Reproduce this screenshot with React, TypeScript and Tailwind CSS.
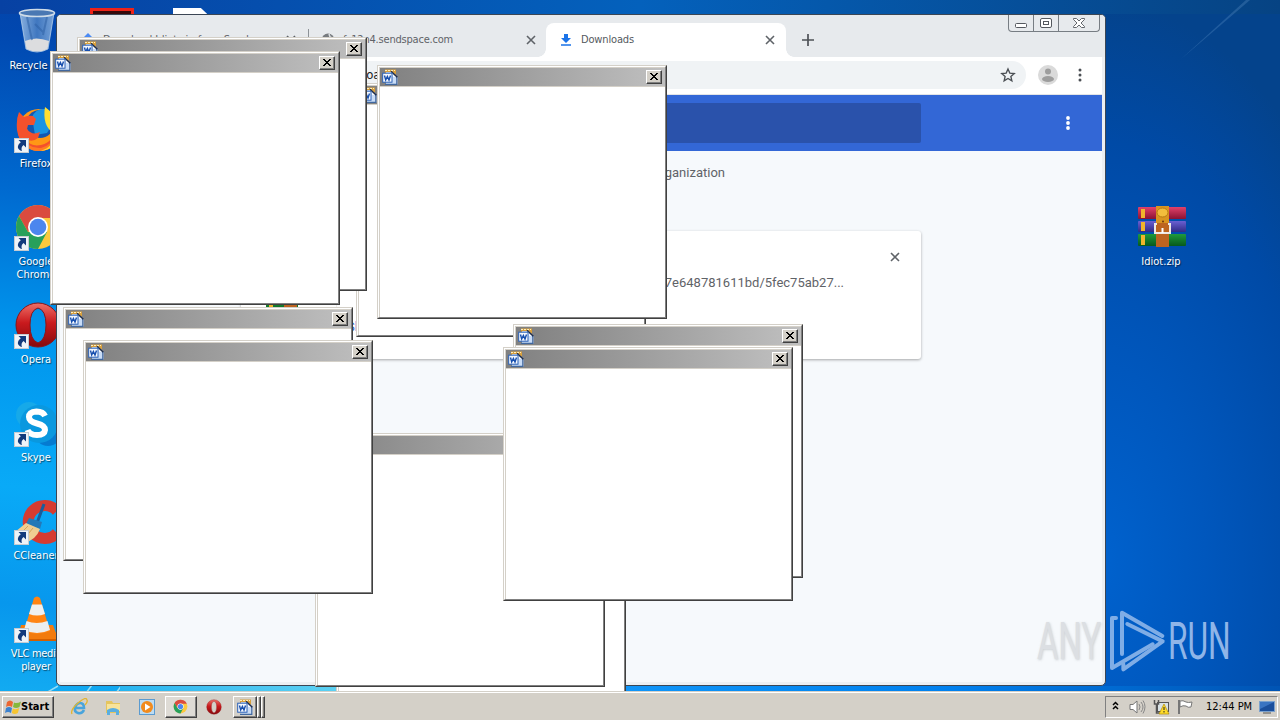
import React from 'react';

type Point = { x: number; y: number };

const WIN: Point[] = [
  { x: 336, y: 458 },
  { x: 315, y: 433 },
  { x: 356, y: 83 },
  { x: 377, y: 65 },
  { x: 77, y: 37 },
  { x: 50, y: 51 },
  { x: 63, y: 307 },
  { x: 83, y: 340 },
  { x: 513, y: 324 },
  { x: 503, y: 347 },
];

function WordIcon({ className = 'h-4 w-4' }: { className?: string }) {
  return (
    <svg viewBox="0 0 16 16" className={className}>
      <path d="M3 .5h11v5H3z" fill="#d9a03c" />
      <path d="M3 1.500h10" stroke="#ffeebc" strokeDasharray="2 1" />
      <path d="M4 3h6.500L15.500 8v7.500H4z" fill="#c9dcf6" />
      <path d="M14.800 7.500v7.800H3" fill="none" stroke="#41689f" strokeWidth="1.200" />
      <path d="M9.500 2.500l5.500 5.500h-4z" fill="#f4f9ff" />
      <path d="M9 2.200l6.300 6" stroke="#1c2c4c" strokeWidth="1.500" />
      <rect x=".7" y="4.200" width="9.300" height="9" fill="#f5f9ff" stroke="#2a60b6" />
      <path d="M2.500 6.500l1.200 4.500 1.700-3.500L7 11l1.500-4.500" fill="none" stroke="#174fae" strokeWidth="1.400" />
    </svg>
  );
}

function PopupWindow({ x, y }: Point) {
  return (
    <div
      className="absolute h-[254px] w-[290px] border border-t-[#d4d0c8] border-r-[#404040] border-b-[#404040] border-l-[#d4d0c8]"
      style={{ left: x, top: y }}
    >
      <div className="flex h-full flex-col border border-t-white border-r-[#808080] border-b-[#808080] border-l-white bg-[#d4d0c8] pt-px pl-px">
        <div className="flex h-[18px] shrink-0 items-center justify-between bg-linear-to-r from-[#808080] to-[#c0c0c0] pr-[3px] pl-[2px]">
          <WordIcon />
          <div className="flex h-[14px] w-4 items-center justify-center border border-t-white border-r-[#404040] border-b-[#404040] border-l-white bg-[#d4d0c8] pb-px shadow-[inset_-1px_-1px_0_#808080]">
            <svg viewBox="0 0 8 7" className="h-[7px] w-2" shapeRendering="crispEdges">
              <path
                d="M0 0h2v1h1v1h2v-1h1v-1h2v1h-1v1h-1v1h-1v1h1v1h1v1h1v1h-2v-1h-1v-1h-2v1h-1v1h-2v-1h1v-1h1v-1h1v-1h-1v-1h-1v-1h-1z"
                fill="#000"
              />
            </svg>
          </div>
        </div>
        <div className="h-px shrink-0 bg-[#d4d0c8]" />
        <div className="flex-1 bg-white" />
      </div>
    </div>
  );
}

function Shortcut() {
  return (
    <svg viewBox="0 0 15 15" className="absolute bottom-0 left-0 h-[15px] w-[15px]">
      <rect x=".5" y=".5" width="14" height="14" fill="#eef3f8" stroke="#c5cbd2" />
      <path d="M4.500 2H12v7.500L9.600 7C7.500 8.500 7 10.500 8 13 3 12 2.500 7.500 6.800 4.300z" fill="#123a7c" />
    </svg>
  );
}

function BinIcon() {
  return (
    <svg viewBox="0 0 48 48" className="h-12 w-12">
      <defs>
        <linearGradient id="bin"><stop stopColor="#a9c9ea" /><stop offset=".5" stopColor="#4f83c4" /><stop offset="1" stopColor="#92b8e2" /></linearGradient>
      </defs>
      <path d="M5 6l6 36q11 6 22 0l6-36z" fill="url(#bin)" fillOpacity=".8" stroke="#b5cfea" strokeWidth=".8" />
      <path d="M10 34q11-5 24 0l-1.500 8q-10 5-21 0z" fill="#dcdddf" />
      <path d="M12 10l5 23M32 10l-4 18M20 17l9 9" stroke="#2f62a6" strokeWidth="2" opacity=".55" />
      <ellipse cx="22" cy="6" rx="17.500" ry="3.500" fill="#4a78b3" stroke="#cfdce8" strokeWidth="1.600" />
    </svg>
  );
}

function FirefoxIcon() {
  return (
    <svg viewBox="0 0 48 48" className="h-12 w-12">
      <circle cx="25" cy="25" r="21" fill="#ff9815" />
      <circle cx="26" cy="19" r="14" fill="#1557b0" />
      <path d="M18 12Q22 3 31 4l4 10 3 6-5 8-12 2z" fill="#1a94e2" />
      <path d="M3 25Q2 14 5 7l5 5q5-2 9-1l3 3-2 6h-6l-1 4q5 7 13 3l-2 6q-6 5-12 1 4 8 15 6Q41 37 41 19q8 25-14 27Q6 45 3 25z" fill="#f4512c" />
      <path d="M8 32q6 12 19 11 12-3 15-16 0 17-17 19Q11 46 8 32z" fill="#ff7b22" />
      <path d="M31 2q16 12 15 25-3 18-20 19 15-4 13-18Q28 20 31 2z" fill="#ffdf31" />
    </svg>
  );
}

function ChromeIcon({ className = 'h-12 w-12' }: { className?: string }) {
  return (
    <svg viewBox="0 0 48 48" className={className}>
      <circle cx="24" cy="24" r="22" fill="#fcc93e" />
      <path d="M5 13A22 22 0 0 1 43 13L44 15H24L14 29z" fill="#da4b3f" />
      <path d="M5 13A22 22 0 0 0 24 46L33 29 14 29z" fill="#27a05b" />
      <circle cx="24" cy="24" r="10" fill="#fff" />
      <circle cx="24" cy="24" r="8.300" fill="#4c86ee" />
    </svg>
  );
}

function OperaIcon({ className = 'h-12 w-12' }: { className?: string }) {
  return (
    <svg viewBox="0 0 48 48" className={className}>
      <defs>
        <linearGradient id="opera" x2="0" y2="1">
          <stop offset="0" stopColor="#ee7068" />
          <stop offset=".45" stopColor="#c91a1d" />
          <stop offset="1" stopColor="#85090c" />
        </linearGradient>
      </defs>
      <path
        fillRule="evenodd"
        d="M24 2a22 22 0 1 0 0 44 22 22 0 1 0 0-44m0 5q8 2 8 17t-8 18q-8-3-8-18t8-17"
        fill="url(#opera)"
        stroke="#8c1215"
      />
    </svg>
  );
}

function SkypeIcon() {
  return (
    <svg viewBox="0 0 48 48" className="h-12 w-12">
      <circle cx="15" cy="16" r="13" fill="#16a9e9" />
      <circle cx="34" cy="34" r="13" fill="#057bd1" />
      <circle cx="25" cy="25" r="19" fill="#0a98df" />
      <path d="M31 17q-2-4.500-8.500-4.500Q15 13 15 18q0 4.500 8 6.500t8 6.500q-.5 5-8 5-7.500 0-9.500-5" fill="none" stroke="#fff" strokeWidth="6" />
    </svg>
  );
}

function CCleanerIcon() {
  return (
    <svg viewBox="0 0 48 48" className="h-12 w-12">
      <path d="M43 14a16.500 16.500 0 1 0 0 22" fill="none" stroke="#d63b31" strokeWidth="11" />
      <path d="M30 7l-7 19" stroke="#195d9c" strokeWidth="3" />
      <path d="M15 21l13 4-2 7-14-5z" fill="#2578b7" />
      <path d="M12 26l14 6q-4 11-16 14L1 35z" fill="#f0cd92" />
      <path d="M14 29L5 38M19 31l-9 11" stroke="#d6a45b" />
    </svg>
  );
}

function VlcIcon() {
  return (
    <svg viewBox="0 0 48 48" className="h-12 w-12">
      <path d="M7 30h32l6 16H3z" fill="#f27b0d" />
      <path d="M20 3q3-3 6 0l10 33q-13 6-26 0z" fill="#ff8412" />
      <path d="M18 9.500h10l3 9.500q-8 3-16 0z" fill="#eef0f0" />
      <path d="M12.500 26q10 4 21 0l2.500 9q-13 6-26 0z" fill="#eceeee" />
      <path d="M3 44h42v2H3z" fill="#d35f00" />
    </svg>
  );
}

function ArchiveIcon() {
  return (
    <svg viewBox="0 0 48 42" className="h-[42px] w-12 shrink-0">
      <defs>
        <linearGradient id="bookRed" x2="0" y2="1"><stop stopColor="#e2416a" /><stop offset="1" stopColor="#8a1233" /></linearGradient>
        <linearGradient id="bookBlue" x2="0" y2="1"><stop stopColor="#6a60d2" /><stop offset="1" stopColor="#312a86" /></linearGradient>
        <linearGradient id="bookGreen" x2="0" y2="1"><stop stopColor="#1f9a3c" /><stop offset="1" stopColor="#07591c" /></linearGradient>
      </defs>
      <rect y="1" width="48" height="12" rx="1" fill="url(#bookRed)" />
      <rect y="15" width="48" height="11" rx="1" fill="url(#bookBlue)" />
      <rect y="28" width="48" height="12" rx="1" fill="url(#bookGreen)" />
      <path d="M3 3h4v9H3zM3 16h4v9H3zM3 29h4v10H3z" fill="#f0b52c" />
      <rect x="18" y="0" width="13" height="41" fill="#bd6420" />
      <path d="M18 0h13v17H18z" fill="#d99420" />
      <ellipse cx="24.500" cy="6.500" rx="5.500" ry="4.500" fill="#f3bd3c" stroke="#b87a12" />
      <circle cx="25" cy="15.500" r="1" fill="#6d3510" />
      <path d="M19 18h-2v9h15v-9h-2" fill="none" stroke="#eee9e5" strokeWidth="2" />
      <path d="M24.500 22v5" stroke="#fff" strokeWidth="2" />
    </svg>
  );
}

type DesktopItemProps = {
  icon: React.ReactNode;
  lines: string[];
  className: string;
  shortcut?: boolean;
};

function DesktopItem({ icon, lines, className, shortcut = true }: DesktopItemProps) {
  return (
    <div className={`absolute flex w-[76px] flex-col items-center text-center ${className}`}>
      <div className={shortcut ? 'relative mt-px ml-[3px] h-12 w-12' : 'relative ml-px h-12 w-12'}>
        {icon}
        {shortcut && <Shortcut />}
      </div>
      <div className="mt-1 text-[11px] leading-[13px] whitespace-nowrap text-white [text-shadow:1px_1px_1px_#0008]">
        {lines.map((l) => (
          <div key={l}>{l}</div>
        ))}
      </div>
    </div>
  );
}

function CloseX({ className }: { className: string }) {
  return (
    <svg viewBox="0 0 10 10" className={className}>
      <path d="M1 1l8 8M9 1L1 9" stroke="#5f6368" strokeWidth="1.600" />
    </svg>
  );
}

function TabStrip() {
  return (
    <div className="relative flex h-[42px] shrink-0 items-end bg-[#e7eaed] pl-5 text-[11px] text-[#5f6368]">
      <div className="flex h-[34px] w-[231px] items-center gap-2 pl-1">
        <svg viewBox="0 0 14 14" className="h-3.5 w-3.5"><path d="M7 0l7 7-7 7-7-7z" fill="#4a8af4" /></svg>
        <span className="w-[175px] overflow-hidden whitespace-nowrap">Download Idiot.zip from Sendspace</span>
        <CloseX className="h-2.5 w-2.5" />
      </div>
      <div className="mb-2 h-5 w-px bg-[#8d9297]" />
      <div className="flex h-[34px] w-[237px] items-center pl-3">
        <svg viewBox="0 0 14 14" className="h-3.5 w-3.5"><circle cx="7" cy="7" r="6.500" fill="#777b7f" /><path d="M2 5l4 1 2 3-2 4M8 1l1 3 4 2" stroke="#dde0e3" strokeWidth="1.500" fill="none" /></svg>
        <span className="ml-2 tracking-[-0.2px]">fs12n4.sendspace.com</span>
        <CloseX className="mr-[10px] ml-auto h-2.5 w-2.5" />
      </div>
      <div className="relative flex h-[34px] w-[240px] items-center rounded-t-lg bg-white pl-[14px]">
        <svg viewBox="0 0 12 12" className="h-3 w-3"><path d="M4 0h4v4h3L6 9 1 4h3zM1 10.300h10v1.400H1z" fill="#1a73e8" /></svg>
        <span className="ml-[9px] tracking-[-0.15px] text-[#55595e]">Downloads</span>
        <CloseX className="mr-[11px] ml-auto h-2.5 w-2.5" />
        <div className="absolute bottom-0 -left-2 h-2 w-2 bg-[radial-gradient(circle_at_0_0,#e7eaed_7.5px,#fff_8px)]" />
        <div className="absolute -right-2 bottom-0 h-2 w-2 bg-[radial-gradient(circle_at_100%_0,#e7eaed_7.5px,#fff_8px)]" />
      </div>
      <svg viewBox="0 0 12 12" className="mb-[11px] ml-4 h-3 w-3"><path d="M6 0v12M0 6h12" stroke="#4d5156" strokeWidth="1.700" /></svg>
      <div className="absolute top-0 right-[5px] flex h-[17px] w-[92px] rounded-b border border-t-0 border-[#777d83]">
        <div className="flex w-[25px] items-center justify-center border-r border-[#777d83]">
          <svg viewBox="0 0 12 5" className="mt-1 h-[5px] w-3"><rect x=".5" y=".5" width="11" height="4" rx="1" fill="#fff" stroke="#54585e" /></svg>
        </div>
        <div className="flex w-[25px] items-center justify-center border-r border-[#777d83]">
          <svg viewBox="0 0 12 10" className="h-2.5 w-3"><rect x=".5" y=".5" width="11" height="9" rx="1.500" fill="#fff" stroke="#54585e" /><rect x="3.500" y="3.500" width="5" height="3" fill="#fff" stroke="#54585e" /></svg>
        </div>
        <div className="flex flex-1 items-center justify-center">
          <svg viewBox="0 0 12 10" className="h-2.5 w-3"><path d="M.5.5h3L6 3 8.500.5h3v1L8 5l3.500 3.500v1h-3L6 7 3.500 9.500h-3v-1L4 5 .5 1.500z" fill="#fff" stroke="#54585e" strokeWidth=".9" /></svg>
        </div>
      </div>
    </div>
  );
}

function Browser() {
  return (
    <div className="absolute top-[14px] left-[56px] flex h-[672px] w-[1050px] flex-col overflow-hidden rounded-[5px] border border-[#3b4654] bg-[#eceff2]">
      <TabStrip />
      <div className="mr-[3px] mb-[3px] ml-[3px] flex min-h-0 flex-1 flex-col bg-[#f6f9fc]">
        <div className="flex h-[38px] shrink-0 items-center border-b border-[#e2e4e7] bg-white pr-5 pb-px">
          <div className="ml-[100px] flex h-7 flex-1 items-center rounded-full bg-[#f0f3f5]">
            <span className="w-[234px] text-right text-[13px] whitespace-nowrap text-[#202124]">Chrome | chrome://downloads</span>
            <svg viewBox="0 0 24 24" className="mr-[10px] ml-auto h-4 w-4"><path d="M12 3l2.700 6.200 6.700.6-5.100 4.400 1.500 6.600-5.800-3.500-5.800 3.500 1.500-6.600-5.100-4.400 6.700-.6z" fill="none" stroke="#4b4f54" strokeWidth="2" /></svg>
          </div>
          <svg viewBox="0 0 20 20" className="ml-3 h-5 w-5"><circle cx="10" cy="10" r="10" fill="#dadada" /><circle cx="10" cy="6.500" r="3" fill="#9d9d9d" /><ellipse cx="10" cy="14" rx="6" ry="3" fill="#9d9d9d" /></svg>
          <svg viewBox="0 0 4 14" className="ml-5 h-3.5 w-1"><g fill="#4b4f54"><circle cx="2" cy="2" r="1.500" /><circle cx="2" cy="7" r="1.500" /><circle cx="2" cy="12" r="1.500" /></g></svg>
        </div>
        <div className="flex h-14 shrink-0 items-center bg-[#3367d6]">
          <div className="ml-[181px] h-10 w-[680px] rounded-[2px] bg-[#2a52ab]" />
          <svg viewBox="0 0 4 14" className="mr-8 ml-auto h-3.5 w-1"><g fill="#fff"><circle cx="2" cy="2" r="1.900" /><circle cx="2" cy="7" r="1.900" /><circle cx="2" cy="12" r="1.900" /></g></svg>
        </div>
        <div className="flex h-11 shrink-0 items-center justify-end pr-[377px] font-[Roboto] text-[13px] text-[#5f6368] [font-stretch:normal]">
          <span>Your browser is managed by your organization</span>
        </div>
        <div className="mt-9 ml-[181px] flex h-32 w-[680px] shrink-0 rounded-[3px] bg-white shadow-[0_1px_3px_#0005]">
          <div className="flex w-24 items-center justify-center border-r border-[#eee] pb-1">
            <div className="-ml-[14px] w-8 overflow-hidden"><ArchiveIcon /></div>
          </div>
          <div className="relative flex flex-1 flex-col items-end pt-[43px] pr-[77px] font-[Roboto] [font-stretch:normal]">
            <span className="text-[13px] leading-[18px] whitespace-nowrap text-[#5f6368]">https://fs12n4.sendspace.com/dlpro/b7e648781611bd/5fec75ab27...</span>
            <CloseX className="absolute top-[21px] right-[21px] h-2.5 w-2.5" />
            <span className="mt-[27px] self-start pl-[10px] text-[13px] leading-[16px] text-[#3367d6]">Show in folder</span>
          </div>
        </div>
      </div>
    </div>
  );
}

function Watermark() {
  return (
    <div className="absolute top-[604px] left-[1037px] flex h-[74px] w-[200px] items-center font-[Roboto] text-[52px] leading-none text-[#8fb5e8] [font-stretch:normal]">
      <div className="w-[65px] pt-px">
        <span className="inline-block origin-left scale-x-[0.63] text-[#dcdfe3] [text-shadow:1px_1px_3px_#9aa0a577]">ANY</span>
      </div>
      <svg viewBox="0 0 210 222" className="h-[74px] w-[70px] shrink-0" fill="none" stroke="#7fade6" strokeWidth="12" strokeLinejoin="round" strokeLinecap="round">
        <path d="M42 42H30V192L152 121" />
        <path d="M60 150V26L181 96M76 60l106 52L64 196v-16" />
      </svg>
      <span className="-ml-[4px] inline-block origin-left scale-x-[0.61] pt-px">RUN</span>
    </div>
  );
}

const raised = 'border border-t-white border-l-white border-r-[#404040] border-b-[#404040] shadow-[inset_-1px_-1px_0_#808080]';

function Taskbar() {
  return (
    <div className="absolute bottom-0 left-0 flex h-7 w-full items-center border-t border-white bg-[#d4d0c8] shadow-[0_-1px_0_#d4d0c8]">
      <div className={`ml-[2px] flex h-[22px] w-[52px] items-center pl-[2px] ${raised}`}>
        <svg viewBox="0 0 16 16" className="h-4 w-4 shrink-0">
          <path d="M2 3q3-3 6 0L7 8Q4 6 1 8z" fill="#ec6732" /><path d="M9 3.500q3 1.500 7-1l-1.500 5.500Q11 10 8 8z" fill="#86b83c" />
          <path d="M1 9q3-2 6 0l-1 5Q3 12 0 14z" fill="#3c82cf" /><path d="M7.800 9.500q3 1.500 6.500-.5l-1.500 5q-3 2-6 0z" fill="#f7c531" />
        </svg>
        <span className="pt-[2px] text-[11px] font-bold text-black">Start</span>
      </div>
      <div className="ml-4 flex items-center">
        <svg viewBox="0 0 18 18" className="h-[18px] w-[18px]"><path d="M14 12q-2 4-6 3-4-1-3-6 2-4 5-4 4 0 4 5H5" fill="none" stroke="#48a4dc" strokeWidth="2.600" /><path d="M2 16Q0 12 8 5t9-3q1 2-2 5" fill="none" stroke="#e3b52d" strokeWidth="1.300" /></svg>
        <svg viewBox="0 0 16 16" className="ml-[17px] h-4 w-4"><path d="M1 2h6l1 2h7v10H1z" fill="#e5c55e" /><path d="M2 5h13v7H2z" fill="#f8e39a" /><path d="M2 16v-5q6-4 12 0v5h-3v-3H5v3z" fill="#5aaee0" /></svg>
        <svg viewBox="0 0 16 16" className="ml-[18px] h-4 w-4"><rect x=".5" y=".5" width="15" height="15" fill="#bddcf2" stroke="#5b9bd0" /><circle cx="8" cy="8" r="6" fill="#f28b1d" /><path d="M6 4.500L11.500 8 6 11.500z" fill="#fff" /></svg>
      </div>
      <div className={`ml-[10px] flex h-[22px] w-8 items-center justify-center bg-[#dedbd5] pr-px ${raised}`}><ChromeIcon className="h-[15px] w-[15px]" /></div>
      <OperaIcon className="ml-[9px] h-4 w-4" />
      <div className="ml-[11px] flex h-[22px]">
        <div className={`flex w-[24px] items-center justify-center ${raised}`}><WordIcon /></div>
        <div className={`w-1 ${raised}`} /><div className={`w-1 ${raised}`} />
      </div>
      <div className="mr-[2px] ml-auto flex h-[22px] w-[173px] items-center border border-t-[#808080] border-r-white border-b-white border-l-[#808080] pl-[6px]">
        <svg viewBox="0 0 7 9" className="mb-[2px] h-[9px] w-[7px]"><path d="M1 4l2.500-2.500L6 4M1 8l2.500-2.500L6 8" fill="none" stroke="#000" strokeWidth="1.500" /></svg>
        <svg viewBox="0 0 17 16" className="ml-[10px] h-4 w-[17px]"><path d="M1 5.500h3L8 2v12l-4-3.500H1z" fill="#fff" stroke="#777" /><path d="M10 5q2 3 0 6M12 3q4 5 0 10M14 1.500q4 6 0 13" fill="none" stroke="#888" /></svg>
        <svg viewBox="0 0 17 16" className="ml-[7px] h-4 w-[17px]"><rect x="4.500" y="3.500" width="11" height="9" fill="#d8e1e4" stroke="#555" /><path d="M1.500 1v4h4V1M3.500 5v9h3" fill="none" stroke="#555" strokeWidth="1.500" /><path d="M11 5l5 10H6z" fill="#ffdc2b" stroke="#b38d00" strokeWidth=".7" /><path d="M11 8v3M11 12v1.500" stroke="#222" /></svg>
        <svg viewBox="0 0 16 16" className="ml-[7px] h-4 w-4"><path d="M2 1v14" stroke="#777" strokeWidth="2" /><path d="M3 2q3-1 6 1 2 1 6 0l-1 5q-3 1-5-1-3-1-6 1z" fill="#fff" stroke="#777" /></svg>
        <span className="ml-[13px] pt-[2px] text-[11px] whitespace-nowrap text-black">12:44 PM</span>
        <svg viewBox="0 0 16 13" className="mt-[2px] mr-[2px] ml-auto h-[13px] w-4"><rect x=".5" y=".5" width="15" height="10" fill="#1b4f9c" stroke="#7ba1cd" /><path d="M1 1h14L1 8z" fill="#3a74c2" /><path d="M4 12h8" stroke="#555" /></svg>
      </div>
    </div>
  );
}

export default function App() {
  return (
    <div className="relative h-[720px] w-[1280px] overflow-hidden bg-[#0254ae] font-['DejaVu_Sans_Condensed','DejaVu_Sans',sans-serif] [font-stretch:condensed]">
      <div className="absolute inset-y-0 left-0 w-[700px] bg-[linear-gradient(185deg,#0640a2_0%,#0148b0_12%,#006ad0_32%,#0095ed_50%,#09aaf7_70%,#0797ed_85%,#16b1f3_100%)]" />
      <div className="absolute inset-y-0 right-0 w-[180px] bg-[radial-gradient(ellipse_300px_560px_at_0%_78%,#0062ce_0%,#0057bd_35%,#004aa6_75%,#04438c_100%)]" />
      <div className="absolute top-0 right-0 h-[14px] w-[1280px] bg-linear-to-r from-[#0741a3] via-[#0461bc] to-[#064383]" />
      <svg viewBox="0 0 80 70" className="absolute top-0 left-[1180px] h-[70px] w-20"><path d="M70 0L0 60L66 0z" fill="#6d9fd2" opacity=".28" /></svg>
      <div className="absolute right-0 bottom-0 h-[34px] w-[655px] bg-linear-to-r from-[#1095f8] via-[#0080ee] to-[#0054b4]" />
      <svg viewBox="0 0 80 10" className="absolute top-[684px] left-[44px] h-2.5 w-20"><path d="M0 10L14 2M42 9l6-8M72 9l6-8" stroke="#b5eaf8" strokeWidth="1.500" opacity=".8" /></svg>
      <div className="absolute top-[686px] left-[120px] h-1.5 w-[216px] bg-linear-to-r from-[#27b5f0] to-[#5bd0f2]" />

      <DesktopItem className="top-[7px] left-0" icon={<BinIcon />} lines={['Recycle Bin']} shortcut={false} />
      <DesktopItem className="top-[104px] -left-[2px]" icon={<FirefoxIcon />} lines={['Firefox']} />
      <DesktopItem className="top-[202px] -left-[2px]" icon={<ChromeIcon />} lines={['Google', 'Chrome']} />
      <DesktopItem className="top-[300px] -left-[2px]" icon={<OperaIcon />} lines={['Opera']} />
      <DesktopItem className="top-[398px] -left-[2px]" icon={<SkypeIcon />} lines={['Skype']} />
      <DesktopItem className="top-[496px] -left-[2px]" icon={<CCleanerIcon />} lines={['CCleaner']} />
      <DesktopItem className="top-[594px] -left-[2px] tracking-[-0.3px]" icon={<VlcIcon />} lines={['VLC media', 'player']} />
      <div className="absolute top-[206px] left-[1123px] flex w-[76px] flex-col items-center text-[11px] leading-[13px] text-white">
        <div className="ml-[2px] h-[42px]"><ArchiveIcon /></div>
        <span className="mt-[7px] [text-shadow:1px_1px_1px_#0008]">Idiot.zip</span>
      </div>
      <div className="absolute top-2 left-[90px] h-8 w-11 border-[3px] border-[#ee2318] bg-[#350a0b]" />
      <div className="absolute top-2 left-[173px] h-8 w-[34px] bg-white [clip-path:polygon(0_0,82%_0,100%_18%,100%_100%,0_100%)]" />

      <Browser />
      {WIN.map((w) => (
        <PopupWindow key={`${w.x}-${w.y}`} x={w.x} y={w.y} />
      ))}
      <Watermark />
      <Taskbar />
    </div>
  );
}
